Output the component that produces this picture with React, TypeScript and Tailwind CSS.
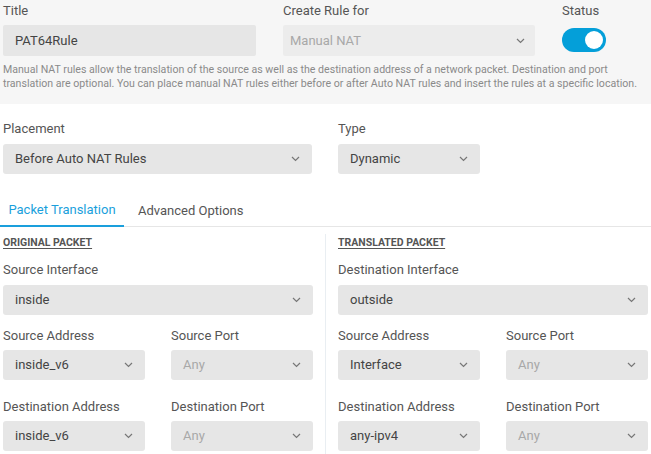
import React from "react";

function Chevron() {
  return (
    <svg width="9" height="6" viewBox="0 0 9 6" className="shrink-0">
      <path d="M1 1 L4.5 4.5 L8 1" fill="none" stroke="#777" strokeWidth="1.2" />
    </svg>
  );
}

function Label({ children }: { children: React.ReactNode }) {
  return <div className="h-[14px] leading-[14px] text-[13px] text-[#555]">{children}</div>;
}

function Select({ value, muted, className }: { value: string; muted?: boolean; className?: string }) {
  return (
    <div
      className={`h-[30px] rounded-[3px] bg-[#e6e6e6] flex items-center justify-between pl-[12px] pr-[12px] text-[13px] ${
        muted ? "text-[#a8a8a8]" : "text-[#444]"
      } ${className ?? ""}`}
    >
      <span>{value}</span>
      <Chevron />
    </div>
  );
}

function Field({ label, value, muted, mt }: { label: string; value: string; muted?: boolean; mt: string }) {
  return (
    <div className={`flex-1 ${mt}`}>
      <Label>{label}</Label>
      <Select value={value} muted={muted} className="mt-[7px]" />
    </div>
  );
}

function PacketColumn({
  heading,
  iface,
  ifaceValue,
  srcAddr,
  dstAddr,
}: {
  heading: string;
  iface: string;
  ifaceValue: string;
  srcAddr: string;
  dstAddr: string;
}) {
  return (
    <div className="w-[310px]">
      <div className="h-[14px] leading-[14px] text-[10.5px] font-bold text-[#555] underline underline-offset-2">{heading}</div>
      <div className="mt-[13px]">
        <Label>{iface}</Label>
        <Select value={ifaceValue} className="mt-[8px]" />
      </div>
      <div className="flex gap-[26px]">
        <Field label="Source Address" value={srcAddr} mt="mt-[14px]" />
        <Field label="Source Port" value="Any" muted mt="mt-[14px]" />
      </div>
      <div className="flex gap-[26px]">
        <Field label="Destination Address" value={dstAddr} mt="mt-[20px]" />
        <Field label="Destination Port" value="Any" muted mt="mt-[20px]" />
      </div>
    </div>
  );
}

export default function App() {
  return (
    <div className="w-[651px] h-[454px] overflow-hidden bg-white font-['Roboto',sans-serif]">
      {/* Header band */}
      <div className="bg-[#f6f6f6] pt-[4px] pb-[13px] pl-[3px] pr-[4px]">
        <div className="flex">
          <div className="w-[253px]">
            <Label>Title</Label>
            <div className="mt-[7px] h-[31px] rounded-[2px] bg-[#e6e6e6] flex items-center pl-[12px] text-[13px] text-[#444]">
              PAT64Rule
            </div>
          </div>
          <div className="w-[252px] ml-[27px]">
            <Label>Create Rule for</Label>
            <div className="mt-[7px] h-[31px] rounded-[2px] bg-[#ececec] flex items-center justify-between pl-[7px] pr-[10px] text-[13px] text-[#a8a8a8]">
              <span>Manual NAT</span>
              <Chevron />
            </div>
          </div>
          <div className="ml-[27px]">
            <Label>Status</Label>
            <div className="mt-[10px] w-[44px] h-[24px] rounded-full bg-[#049fd9] flex items-center justify-end pr-[3px]">
              <div className="w-[18px] h-[18px] rounded-full bg-white" />
            </div>
          </div>
        </div>
        <p className="mt-[7px] text-[10.6px] leading-[14px] text-[#8a8a8a] whitespace-nowrap">
          Manual NAT rules allow the translation of the source as well as the destination address of a network packet. Destination and port
          <br />
          translation are optional. You can place manual NAT rules either before or after Auto NAT rules and insert the rules at a specific location.
        </p>
      </div>

      {/* Placement / Type */}
      <div className="flex pl-[3px] mt-[18px]">
        <div className="w-[309px]">
          <Label>Placement</Label>
          <Select value="Before Auto NAT Rules" className="mt-[8px]" />
        </div>
        <div className="w-[142px] ml-[26px]">
          <Label>Type</Label>
          <Select value="Dynamic" className="mt-[8px]" />
        </div>
      </div>

      {/* Tabs */}
      <div className="mt-[21px] h-[32px] flex border-b border-[#e6e6e6]">
        <div className="w-[124px] flex items-center justify-center text-[13px] text-[#1a9fdc] border-b-2 border-[#1a9fdc] -mb-px">
          Packet Translation
        </div>
        <div className="ml-[14px] flex items-center text-[13px] text-[#555]">Advanced Options</div>
      </div>

      {/* Packet columns */}
      <div className="flex pt-[9px] pl-[3px]">
        <PacketColumn
          heading="ORIGINAL PACKET"
          iface="Source Interface"
          ifaceValue="inside"
          srcAddr="inside_v6"
          dstAddr="inside_v6"
        />
        <div className="ml-[12px] mr-[12px] w-px bg-[#e9eef2] -mt-[2px] h-[230px]" />
        <PacketColumn
          heading="TRANSLATED PACKET"
          iface="Destination Interface"
          ifaceValue="outside"
          srcAddr="Interface"
          dstAddr="any-ipv4"
        />
      </div>
    </div>
  );
}
